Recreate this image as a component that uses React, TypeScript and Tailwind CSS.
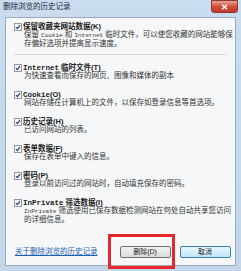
const cjk = { fontFamily: '"Liberation Sans", "Noto Sans CJK SC", sans-serif' };
const mono = { fontFamily: '"Liberation Mono", "Noto Sans CJK SC", monospace' };

const Check = () => (
  <svg width="8" height="8" viewBox="0 0 8 8" className="shrink-0">
    <rect x="0.5" y="0.5" width="7" height="7" fill="#f4f6f8" stroke="#8f9aa6" />
    <path d="M2 4.2 L3.4 5.6 L6 2.2" fill="none" stroke="#2b3f78" strokeWidth="1.2" />
  </svg>
);

const L = (props: any) => <span style={mono} className="text-[6px]">{props.children}</span>;

const Item = (props: any) => (
  <div className="flex flex-col">
    <div className="flex items-center h-[9px] gap-[1px]">
      <Check />
      <span className="font-bold text-[7.5px] leading-[9px] whitespace-nowrap text-[#1a1a1a]">{props.title}</span>
    </div>
    <div className="pl-[10px] text-[7.5px] leading-[8px] whitespace-nowrap text-[#333]">{props.children}</div>
  </div>
);

const App = () => {
  return (
    <div style={cjk} className="w-[241px] h-[271px] relative flex flex-col bg-gradient-to-b from-[#cadcef] to-[#c3d6ea] overflow-hidden">
      <div className="h-[17px] flex justify-between items-start pl-[3px] pr-[3px]">
        <span className="text-[7.5px] leading-[13px] text-[#1c2a3a] whitespace-nowrap">删除浏览的历史记录</span>
        <div className="w-[27px] h-[13px] rounded-b-[3px] border border-[#8a3a30] bg-gradient-to-b from-[#e9a08f] via-[#d0503c] to-[#c0392b] flex items-center justify-center">
          <svg width="7" height="6" viewBox="0 0 7 6">
            <path d="M1 0.8 L6 5.2 M6 0.8 L1 5.2" stroke="#fff" strokeWidth="1.5" />
          </svg>
        </div>
      </div>
      <div className="flex-1 mx-[5px] mb-[5px] border border-[#9aaabb] bg-[#f6f7f8] flex flex-col pl-[8px] pr-[4px] pt-[4px]">
        <Item title="保留收藏夹网站数据(K)">
          保留 <L>Cookie</L> 和 <L>Internet</L> 临时文件，可以使您收藏的网站能够保<br />存偏好选项并提高显示速度。
        </Item>
        <div className="h-px bg-[#d5d9de] mt-[6px] mb-[8px] mr-[4px]" />
        <div className="flex flex-col gap-[10px]">
          <Item title={<><span style={mono}>Internet</span> 临时文件(T)</>}>为快速查看而保存的网页、图像和媒体的副本</Item>
          <Item title={<><span style={mono}>Cookie</span>(O)</>}>网站存储在计算机上的文件，以保存如登录信息等首选项。</Item>
          <Item title="历史记录(H)">已访问网站的列表。</Item>
          <Item title="表单数据(F)">保存在表单中键入的信息。</Item>
          <Item title="密码(P)">登录以前访问过的网站时，自动填充保存的密码。</Item>
          <Item title={<><span style={mono}>InPrivate</span> 筛选数据(I)</>}>
            <L>InPrivate</L> 筛选使用已保存数据检测网站在何处自动共享您访问<br />的详细信息。
          </Item>
        </div>
        <div className="flex-1" />
        <div className="flex items-center h-[12px] mb-[7px]">
          <span className="text-[7.5px] text-[#1a5fb4] underline whitespace-nowrap ml-[1px]">关于删除浏览的历史记录</span>
          <button className="ml-[22px] w-[51px] h-[12px] rounded-[2px] border border-[#707070] bg-gradient-to-b from-[#f3f3f3] to-[#dcdcdc] text-[7px] leading-[10px] text-[#222]">删除(D)</button>
          <button className="ml-[9px] w-[51px] h-[12px] rounded-[2px] border border-[#3c7fb1] bg-gradient-to-b from-[#eaf6fd] to-[#bee6fd] text-[7px] leading-[10px] text-[#222]">取消</button>
        </div>
      </div>
      <div className="absolute left-[108px] top-[234px] w-[67px] h-[35px] border-[3px] border-[#e8262b]" />
    </div>
  );
};

export default App;
